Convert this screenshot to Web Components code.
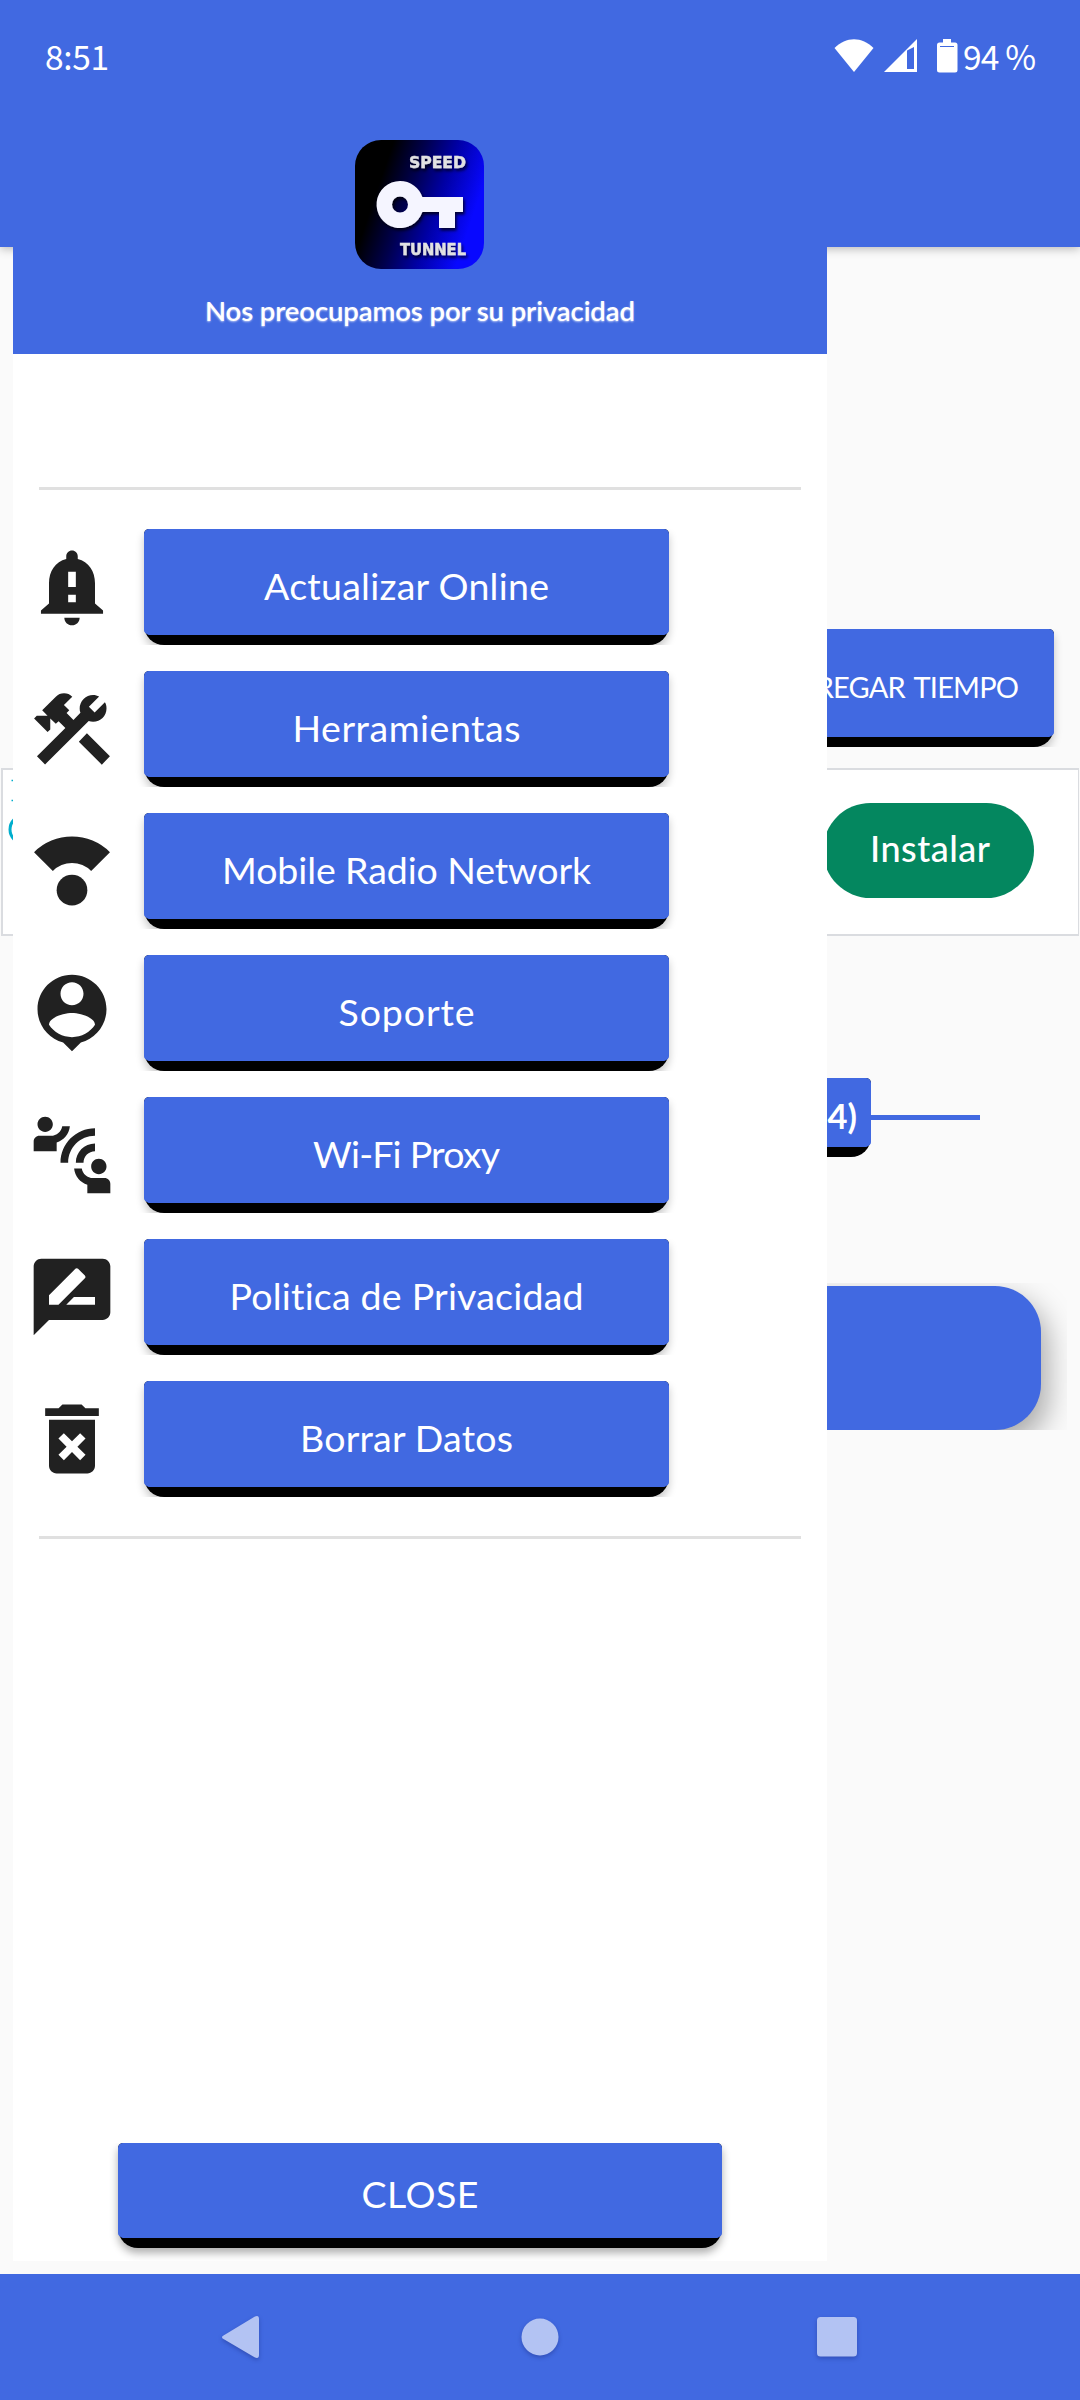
<!DOCTYPE html>
<html lang="es">
<head>
<meta charset="utf-8">
<title>Speed Tunnel</title>
<style>
  html, body { margin: 0; padding: 0; }
  body { width: 1080px; height: 2400px; overflow: hidden; background: #fafafa; font-family: Lato, "Open Sans", sans-serif; --brand: #4169e1; }
</style>
</head>
<body>
<app-screen></app-screen>
<script>
const define = (name, html, setup) => {
  const tpl = document.createElement('template');
  tpl.innerHTML = html;
  customElements.define(name, class extends HTMLElement {
    constructor() {
      super();
      this.attachShadow({ mode: 'open' }).append(tpl.content.cloneNode(true));
    }
    connectedCallback() { if (setup) setup(this, this.shadowRoot); }
  });
};

/* Text line tracked so that it fills the width given in the "w" attribute. */
define('fit-text', `<style>
  :host { display: inline-block; white-space: pre; font-variant-ligatures: none; }
</style><span><slot></slot></span>`, (el, root) => {
  const w = +el.getAttribute('w');
  if (!w) return;
  const span = root.querySelector('span');
  el.style.letterSpacing = '0.001px';
  const ls = (w - span.getBoundingClientRect().width) / (el.textContent.length - 1);
  el.style.letterSpacing = ls + 'px';
  el.style.marginRight = -ls + 'px';
});

/* Raised button: blue face on a black rounded base. */
define('raised-button', `<style>
  :host { display: block; box-sizing: border-box; height: 116px; text-align: center; color: #fff; font-size: 37.500px; line-height: 113px; }
  .clip { height: 100%; clip-path: inset(0 -16px var(--clip, 0px) -16px); }
  .base { height: 100%; border-radius: 5px 5px 20px 20px; background: #000; box-shadow: 0 5px 8px rgba(0,0,0,var(--sh, .22)); }
  .face { height: calc(100% - 10px); border-radius: 5px; background: var(--brand);
          clip-path: polygon(0 0, 100% 0, 100% calc(100% - 3px), calc(100% - 4px) 100%, 4px 100%, 0 calc(100% - 3px)); }
</style><div class="clip"><div class="base"><div class="face"><slot></slot></div></div></div>`);

const ICONS = {
  bell: '<path fill-rule="evenodd" d="M18 16.3v-5.3c0-3.07-1.64-5.64-4.5-6.32V4c0-.83-.67-1.5-1.5-1.5s-1.5.67-1.5 1.5v.68C7.63 5.36 6 7.92 6 11v5.3L3.9 18.1v.9h16.2v-.9L18 16.3zM13 16h-2v-2h2v2zm0-4h-2V8h2v4zm-1 10c1.1 0 2-.9 2-2h-4c0 1.1.89 2 2 2z"/>',
  tools: '<path d="M13.78 15.3l6 6 2.11-2.16-6-6-2.11 2.16zM17.5 10.1c-.39 0-.81-.05-1.14-.19L4.97 21.25l-2.11-2.11 7.41-7.4L8.5 9.96l-.72.7-1.45-1.4v2.85l-.7.7-3.52-3.56.7-.7h2.81l-1.4-1.41 3.56-3.56a3 3 0 0 1 4.29 0L9.89 5.74l1.4 1.4-.7.71 1.79 1.78 1.82-1.88C14.06 7.42 14 7 14 6.63a3.5 3.5 0 0 1 3.5-3.5c.59 0 1.1.14 1.58.41l-2.67 2.67 1.5 1.5 2.67-2.67c.28.46.42.96.42 1.59 0 1.92-1.55 3.47-3.5 3.47z"/>',
  radio: '<path d="M2.1 7.1A14 14 0 0 1 21.9 7.1L17 12A7 7 0 0 0 7 12z"/><circle cx="12" cy="17" r="4"/>',
  person: '<path fill-rule="evenodd" d="M12 2c-4.97 0-9 4.03-9 9 0 4.17 2.84 7.67 6.69 8.69L12 22l2.31-2.31C18.16 18.67 21 15.17 21 11c0-4.97-4.03-9-9-9zm0 2c1.66 0 3 1.34 3 3s-1.34 3-3 3-3-1.34-3-3 1.34-3 3-3zm0 14.3c-2.5 0-4.71-1.28-6-3.22.03-1.99 4-3.08 6-3.08 1.99 0 5.97 1.09 6 3.08-1.29 1.94-3.5 3.22-6 3.22z"/>',
  connect: '<path d="M11 14H9c0-4.97 4.03-9 9-9v2c-3.87 0-7 3.13-7 7zM18 11V9c-2.76 0-5 2.24-5 5h2c0-1.66 1.34-3 3-3zM7 4c0-1.11-.89-2-2-2s-2 .89-2 2 .89 2 2 2 2-.89 2-2zM11.45 4.5h-2C9.21 5.92 7.99 7 6.5 7h-3C2.67 7 2 7.67 2 8.5V11h6V8.74c1.86-.59 3.25-2.23 3.45-4.24zM19 17c1.11 0 2-.89 2-2s-.89-2-2-2-2 .89-2 2 .89 2 2 2zM20.5 18h-3c-1.49 0-2.71-1.08-2.95-2.5h-2c.2 2.01 1.59 3.65 3.45 4.24V22h6v-2.5c0-.83-.67-1.5-1.5-1.5z"/>',
  review: '<path fill-rule="evenodd" d="M20 2H4c-1.1 0-2 .9-2 2v18l4-4h14c1.1 0 2-.9 2-2V4c0-1.1-.9-2-2-2zM6 14v-2.47l6.88-6.88c.2-.2.51-.2.71 0l1.77 1.77c.2.2.2.51 0 .71L8.47 14H6zm12 0h-7.5l2-2H18v2z"/>',
  trash: '<path fill-rule="evenodd" d="M6 19c0 1.1.9 2 2 2h8c1.1 0 2-.9 2-2V7H6v12zm2.46-7.12l1.41-1.41L12 12.59l2.12-2.12 1.41 1.41L13.41 14l2.12 2.12-1.41 1.41L12 15.41l-2.12 2.12-1.41-1.41L10.59 14l-2.13-2.12zM15.5 4l-1-1h-5l-1 1H5v2h14V4z"/>'
};

define('menu-row', `<style>
  :host { display: flex; gap: 26px; height: 116px; align-items: center; }
  svg { display: block; width: 92px; height: 92px; fill: #212121; }
  raised-button { width: 525px; }
</style><svg viewBox="0 0 24 24"></svg><raised-button><slot></slot></raised-button>`, (el, root) => {
  root.querySelector('svg').innerHTML = ICONS[el.getAttribute('icon')];
});

define('app-logo', `<style>
  :host { display: block; width: 129px; height: 129px; margin-right: 2px; }
  svg { display: block; }
  text { font: 700 15px "DejaVu Sans", sans-serif; fill: #e2e2e2; stroke: #e2e2e2; stroke-width: .4px; }
</style>
<svg width="129" height="129" viewBox="0 0 129 129">
  <defs>
    <linearGradient id="g" x1="0" y1=".33" x2="1" y2=".67">
      <stop offset=".17" stop-color="#000"/><stop offset=".4" stop-color="#00004e"/>
      <stop offset=".62" stop-color="#0000a4"/><stop offset=".9" stop-color="#0808ff"/>
    </linearGradient>
    <filter id="s" x="-20%" y="-20%" width="150%" height="150%">
      <feDropShadow dx="1.5" dy="2.5" stdDeviation="1.5" flood-color="#000" flood-opacity=".75"/>
    </filter>
  </defs>
  <rect width="129" height="129" rx="26" fill="url(#g)"/>
  <g filter="url(#s)">
    <text x="54" y="28" textLength="57" lengthAdjust="spacingAndGlyphs">SPEED</text>
    <text x="45" y="115" textLength="66" lengthAdjust="spacingAndGlyphs">TUNNEL</text>
    <path fill="#f5f5ff" fill-rule="evenodd" d="M45 41a23.5 23.5 0 0 1 22.3 16H108v15h-8v16H84V72H67.3A23.5 23.5 0 1 1 45 41zm0 15.5a8 8 0 1 0 0 16 8 8 0 0 0 0-16z"/>
  </g>
</svg>`);

define('nav-drawer', `<style>
  :host { display: flex; flex-direction: column; width: 814px; height: 2261px; background: #fff; }
  header { height: 354px; box-sizing: border-box; padding-top: 140px; background: var(--brand); color: #fff;
           display: flex; flex-direction: column; align-items: center; }
  .tag { margin-top: 25px; font-size: 27.500px; line-height: 34px; font-weight: 600; text-shadow: 0 1px 2px rgba(255,255,255,.6); }
  hr { margin: 0 26px; border: 0; height: 3px; background: #e0e0e0; }
  hr.top { margin-top: 133px; }
  nav { display: flex; flex-direction: column; gap: 26px; padding: 39px 0 39px 13px; }
  raised-button.close { width: 604px; height: 105px; line-height: 102px; margin: auto auto 13px; --clip: -13px; --sh: .32; }
</style>
<header><app-logo></app-logo><div class="tag"><fit-text w="430">Nos preocupamos por su privacidad</fit-text></div></header>
<hr class="top">
<nav>
  <menu-row icon="bell"><fit-text w="285">Actualizar Online</fit-text></menu-row>
  <menu-row icon="tools"><fit-text w="228">Herramientas</fit-text></menu-row>
  <menu-row icon="radio"><fit-text w="369">Mobile Radio Network</fit-text></menu-row>
  <menu-row icon="person"><fit-text w="136">Soporte</fit-text></menu-row>
  <menu-row icon="connect"><fit-text w="187">Wi-Fi Proxy</fit-text></menu-row>
  <menu-row icon="review"><fit-text w="354">Politica de Privacidad</fit-text></menu-row>
  <menu-row icon="trash"><fit-text w="213">Borrar Datos</fit-text></menu-row>
</nav>
<hr>
<raised-button class="close"><fit-text w="117">CLOSE</fit-text></raised-button>`);

define('status-bar', `<style>
  :host { display: flex; justify-content: space-between; box-sizing: border-box; width: 1080px; height: 112px; padding: 0 44px 0 45px; color: #fff;
          font: 33.500px/112px "Noto Sans CJK SC", "Noto Sans", sans-serif; }
  .right { display: flex; align-items: center; }
  svg { display: block; fill: #fff; margin-right: 1px; }
</style>
<fit-text w="64">8:51</fit-text>
<div class="right">
  <svg width="128" height="34" viewBox="0 0 128 34">
    <path d="M.5 9C12-2.700 28-2.700 39.500 9L20 33z"/>
    <path fill-rule="evenodd" d="M50 33L83 0V33zM73 11.500V30h7V8z"/>
    <path d="M109 0h8v3.500h4a2.500 2.500 0 0 1 2.500 2.500v25a2.500 2.500 0 0 1-2.500 2.500h-15.500a2.500 2.500 0 0 1-2.500-2.500V6a2.500 2.500 0 0 1 2.500-2.500h3.500z"/>
    <path d="M106 7.500h14" stroke="#4169e1"/>
  </svg>
  <fit-text w="73">94 %</fit-text>
</div>`);

define('ad-banner', `<style>
  :host { display: flex; justify-content: space-between; align-items: flex-start; box-sizing: border-box; margin: 0 1px; height: 168px; border: 2px solid #dadce0; border-right-width: 1px; background: #fff; padding-right: 44px; }
  svg { display: block; }
  .cta { width: 211px; height: 95px; margin-top: 33px; border-radius: 48px; background: #04875f; color: #fff; text-align: center; font-size: 36px; line-height: 91px; font-weight: 500; box-sizing: border-box; padding-left: 3px; }
</style>
<svg width="36" height="80" viewBox="0 0 36 80" fill="none" stroke="#00aecd" stroke-width="3"><path d="M8.500 10.500h3M8.500 30.500h3" stroke-width="1.500"/><circle cx="21" cy="59.500" r="14"/></svg>
<div class="cta"><fit-text w="120">Instalar</fit-text></div>`);

define('main-content', `<style>
  :host { display: flex; flex-direction: column; width: 1080px; height: 2274px; background: #fafafa; }
  .bar { flex: none; height: 247px; background: var(--brand); box-shadow: 0 2px 9px rgba(0,0,0,.26); }
  .time { width: 420px; height: 118px; margin: 382px 26px 21px auto; font-size: 29px; line-height: 116px; word-spacing: 3px; }
  .time fit-text { display: block; text-align: right; padding-right: 35px; }
  .server { display: flex; align-items: center; justify-content: flex-end; height: 79px; margin: 142px 100px 0 0; }
  .server raised-button { width: 300px; height: 79px; font-size: 34.500px; font-weight: 700; line-height: 76px; text-align: right; --sh: 0; }
  .server raised-button fit-text { padding-right: 14px; }
  .server i { width: 109px; height: 5px; background: var(--brand); }
  .connect { box-sizing: border-box; height: 147px; margin: 126px 13px 0; padding: 3px 26px 0; overflow: hidden; }
  .connect div { height: 144px; border-radius: 46px; background: var(--brand); box-shadow: 6px 13px 30px rgba(0,0,0,.34); }
</style>
<div class="bar"></div>
<raised-button class="time"><fit-text w="242">AGREGAR TIEMPO</fit-text></raised-button>
<ad-banner></ad-banner>
<div class="server"><raised-button><fit-text>4)</fit-text></raised-button><i></i></div>
<div class="connect"><div></div></div>`);

define('system-nav', `<style>
  :host { display: block; height: 126px; background: var(--brand); }
  svg { display: block; fill: #b3c3f3; filter: drop-shadow(0 2px 2px rgba(0,0,60,.25)); }
</style>
<svg width="1080" height="126" viewBox="0 0 1080 126">
  <path d="M223.500 61.500L254.500 42.700Q259 40.500 259 45V81Q259 85.500 254.500 83.300L223.500 65Q220.500 63.200 223.500 61.500z"/>
  <circle cx="540" cy="63" r="18.500"/><rect x="817" y="43" width="40" height="39.500" rx="3.500"/>
</svg>`);

define('app-screen', `<style>
  :host { display: block; position: relative; width: 1080px; height: 2400px; overflow: hidden; }
  nav-drawer { position: absolute; left: 13px; top: 0; }
  status-bar { position: absolute; left: 0; top: 0; }
</style>
<main-content></main-content>
<system-nav></system-nav>
<nav-drawer></nav-drawer>
<status-bar></status-bar>`);
</script>
</body>
</html>
